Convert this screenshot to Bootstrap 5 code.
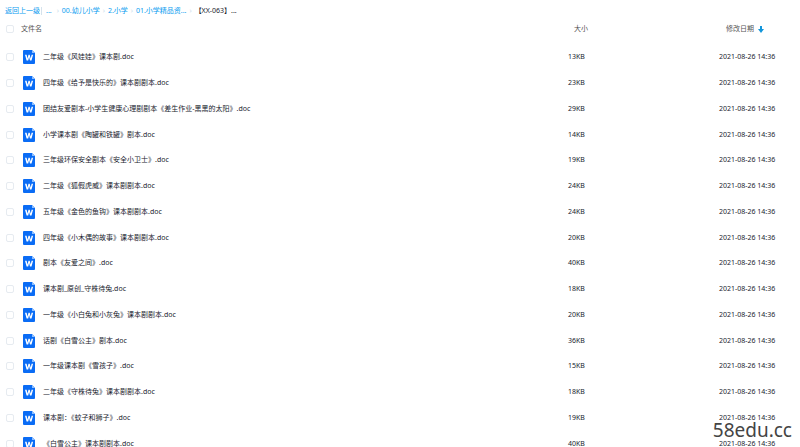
<!DOCTYPE html>
<html lang="zh-CN">
<head>
<meta charset="utf-8">
<meta name="viewport" content="width=device-width, initial-scale=1">
<title>文件列表</title>
<link href="https://cdn.jsdelivr.net/npm/bootstrap@5.3.0/dist/css/bootstrap.min.css" rel="stylesheet">
<style>
body { font-family: "Noto Sans", "Noto Sans CJK SC", sans-serif; font-size: 7px; line-height: 10px; color: #20232e; background: #fff; }
.crumbs { --bs-breadcrumb-divider: "›"; --bs-breadcrumb-item-padding-x: 3px; --bs-breadcrumb-divider-color: #c9dcec; --bs-breadcrumb-font-size: 7px; --bs-breadcrumb-margin-bottom: 0; padding: 6px 5px 0; }
.crumbs a { color: #0a9cf0; text-decoration: none; }
.crumbs .after-bar { border-left: 1px solid #d5e2ec; margin-left: 1px; padding: 0 2px 0 4px; line-height: 8px; align-self: center; }
.crumbs .after-bar::before { content: none; }
.crumbs .active { color: #20232e; }
.files { table-layout: fixed; }
.files th, .files td { padding: 0; font-weight: 400; vertical-align: middle; }
.files thead tr { height: 28px; }
.files thead th { color: #555; padding-bottom: 2px; }
.files tbody tr { height: 26px; }
.files tbody tr:nth-child(4n) { height: 25px; }
.col-pick { width: 21px; }
.col-size { width: 151px; }
.col-date { width: 81px; }
.files .pick { padding-left: 6px; }
.files th.size-head { padding-left: 6px; }
.files th.date-head { padding-left: 7px; }
.pick .form-check-input { width: 8px; height: 8px; border-color: #e6ebf0; border-radius: 2px; }
.doc-icon { width: 14px; height: 14px; margin-left: 1px; margin-right: 7px; }
.sort, .sort:hover { color: inherit; font-size: 7px; line-height: 10px; }
.sort svg { width: 6px; height: 7px; }
.site-mark { right: 8px; bottom: 8px; font-size: 19px; line-height: 18px; color: #444; text-shadow: 0 0 1px #fff, 1px 1px 0 #fff, -1px -1px 0 #fff; }
</style>
</head>
<body>
<div class="vh-100 overflow-hidden position-relative">
<svg class="d-none" aria-hidden="true"><symbol id="doc" viewBox="0 0 14 14"><path fill="#0a6cf5" d="M2 0h8l3 3v10a1 1 0 0 1-1 1H2a1 1 0 0 1-1-1V1a1 1 0 0 1 1-1z"/><path fill="#8fc0ff" d="M10 0l3 3h-3z"/><path fill="#fff" d="M3 4.8h1.6l.9 3.6 1-3.6h1.2l1 3.6.9-3.6h1.5L9.5 10.4H8L7.1 7.1l-.9 3.3H4.6z"/></symbol></svg>
<nav aria-label="路径">
<ol class="breadcrumb crumbs">
<li><a href="#">返回上一级</a></li>
<li class="breadcrumb-item after-bar"><a href="#">...</a></li>
<li class="breadcrumb-item"><a href="#">00.幼儿小学</a></li>
<li class="breadcrumb-item"><a href="#">2.小学</a></li>
<li class="breadcrumb-item"><a href="#">01.小学精品资...</a></li>
<li class="breadcrumb-item active" aria-current="page">【XX-063】...</li>
</ol>
</nav>
<table class="files w-100">
<colgroup><col class="col-pick"><col><col class="col-size"><col class="col-date"></colgroup>
<thead><tr>
<th class="pick"><input class="form-check-input d-block m-0" type="checkbox" aria-label="全选"></th>
<th scope="col">文件名</th>
<th scope="col" class="size-head">大小</th>
<th scope="col" class="date-head"><button type="button" class="sort btn btn-link border-0 p-0 text-decoration-none d-flex align-items-center gap-1">修改日期<svg viewBox="0 0 6 7" aria-hidden="true"><path fill="#1296db" d="M2 0h2v3h2L3 7 0 3h2z"/></svg></button></th>
</tr></thead>
<tbody id="rows"></tbody>
</table>
<div class="site-mark position-absolute">58edu.cc</div>
</div>
<script src="https://cdn.jsdelivr.net/npm/bootstrap@5.3.0/dist/js/bootstrap.bundle.min.js"></script>
<script>
const files = [
["二年级《风娃娃》课本剧.doc", 13], ["四年级《给予是快乐的》课本剧剧本.doc", 23],
["团结友爱剧本-小学生健康心理剧剧本《差生作业-黑黑的太阳》.doc", 29], ["小学课本剧《陶罐和铁罐》剧本.doc", 14],
["三年级环保安全剧本《安全小卫士》.doc", 19], ["二年级《狐假虎威》课本剧剧本.doc", 24],
["五年级《金色的鱼钩》课本剧剧本.doc", 24], ["四年级《小木偶的故事》课本剧剧本.doc", 20],
["剧本《友爱之间》.doc", 40], ["课本剧_原创_守株待兔.doc", 18],
["一年级《小白兔和小灰兔》课本剧剧本.doc", 20], ["话剧《白雪公主》剧本.doc", 36],
["一年级课本剧《雪孩子》.doc", 15], ["二年级《守株待兔》课本剧剧本.doc", 18],
["课本剧：《蚊子和狮子》.doc", 19], ["《白雪公主》课本剧剧本.doc", 40]
];
document.getElementById("rows").innerHTML = files.map(([name, kb], i) => `<tr>
<td class="pick"><input class="form-check-input d-block m-0" type="checkbox" id="f${i}"></td>
<td><label class="d-flex align-items-center" for="f${i}"><svg class="doc-icon flex-shrink-0" aria-hidden="true"><use href="#doc"/></svg><span>${name}</span></label></td>
<td>${kb}KB</td><td>2021-08-26 14:36</td></tr>`).join("");
</script>
</body>
</html>
